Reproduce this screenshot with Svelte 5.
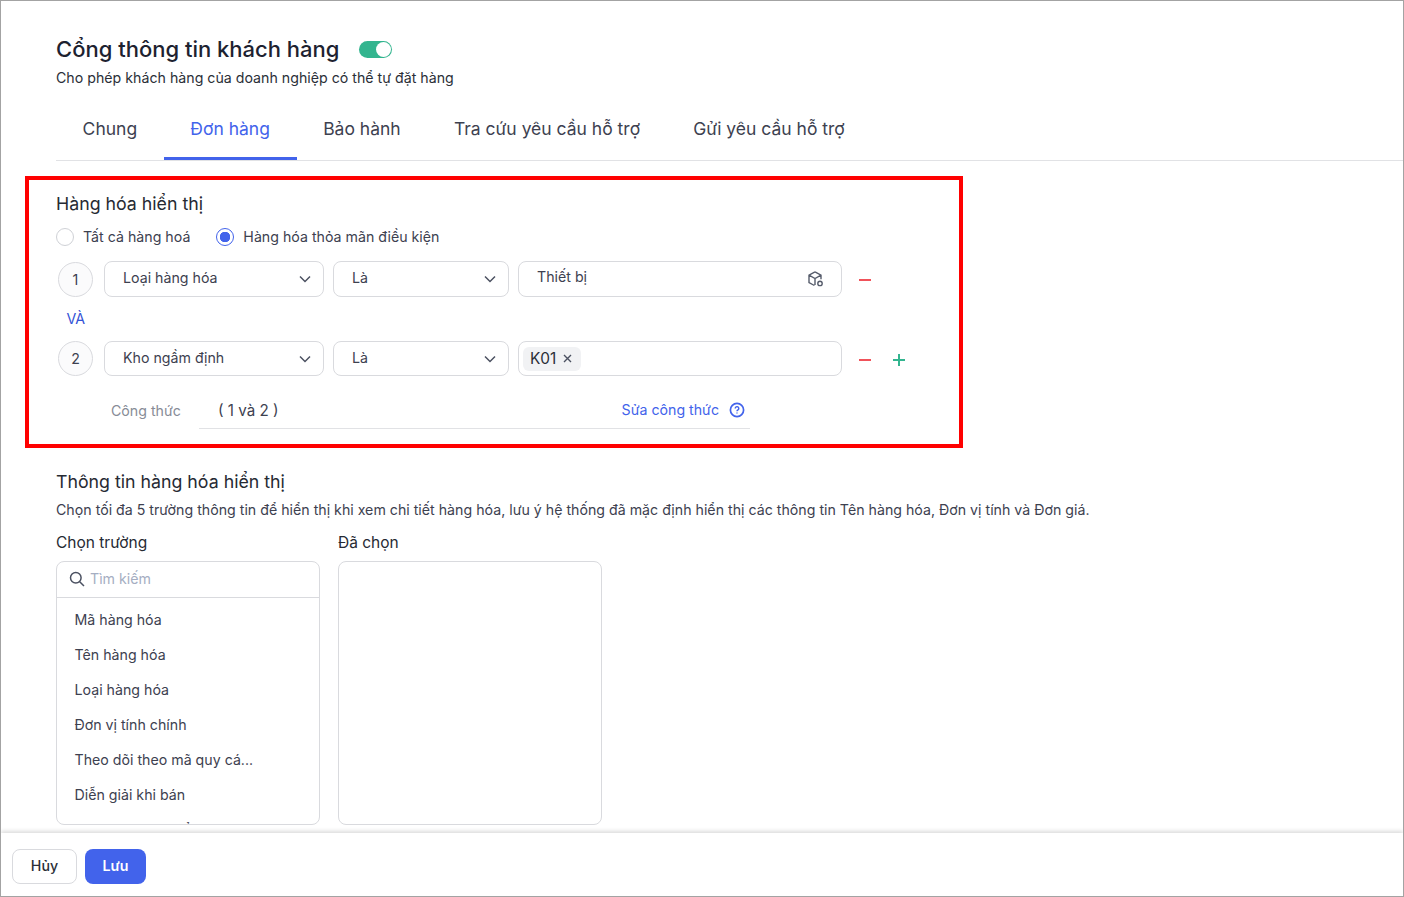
<script>
    const tabs = ["Chung", "Đơn hàng", "Bảo hành", "Tra cứu yêu cầu hỗ trợ", "Gửi yêu cầu hỗ trợ"];
    const fields = [
        "Mã hàng hóa",
        "Tên hàng hóa",
        "Loại hàng hóa",
        "Đơn vị tính chính",
        "Theo dõi theo mã quy cá...",
        "Diễn giải khi bán",
        "Đơn vị quy chuyển"
    ];
</script>

<div class="frame">
    <main>
        <header class="head">
            <div class="title-row">
                <h1>Cổng thông tin khách hàng</h1>
                <span class="toggle"><span class="knob"></span></span>
            </div>
            <p>Cho phép khách hàng của doanh nghiệp có thể tự đặt hàng</p>
        </header>

        <nav class="tabs">
            {#each tabs as tab, i}
                <span class="tab" class:active={i === 1}>{tab}</span>
            {/each}
        </nav>

        <section class="marked">
            <h2>Hàng hóa hiển thị</h2>
            <div class="radios">
                <label class="radio"><span class="dot"></span>Tất cả hàng hoá</label>
                <label class="radio"><span class="dot on"></span>Hàng hóa thỏa mãn điều kiện</label>
            </div>

            <div class="rule">
                <span class="num">1</span>
                <div class="box sel-a">
                    <span>Loại hàng hóa</span>
                    <svg width="12" height="8" viewBox="0 0 12 8"><path d="M1 1.5l5 5 5-5" fill="none" stroke="#4b5161" stroke-width="1.5"/></svg>
                </div>
                <div class="box sel-b">
                    <span>Là</span>
                    <svg width="12" height="8" viewBox="0 0 12 8"><path d="M1 1.5l5 5 5-5" fill="none" stroke="#4b5161" stroke-width="1.5"/></svg>
                </div>
                <div class="box val">
                    <span class="val-text">Thiết bị</span>
                    <svg class="cube" width="18" height="18" viewBox="0 0 18 18" fill="none" stroke="#565c6b" stroke-width="1.4">
                        <path d="M9 1.8l6 3.3v4.2M9 1.8L3 5.1v7.4l5.4 3M3 5.1l6 3.4 6-3.4M9 8.5v6.6"/>
                        <circle cx="14" cy="13.4" r="2.2"/>
                    </svg>
                </div>
                <span class="minus"></span>
            </div>

            <div class="and">VÀ</div>

            <div class="rule second">
                <span class="num">2</span>
                <div class="box sel-a">
                    <span>Kho ngầm định</span>
                    <svg width="12" height="8" viewBox="0 0 12 8"><path d="M1 1.5l5 5 5-5" fill="none" stroke="#4b5161" stroke-width="1.5"/></svg>
                </div>
                <div class="box sel-b">
                    <span>Là</span>
                    <svg width="12" height="8" viewBox="0 0 12 8"><path d="M1 1.5l5 5 5-5" fill="none" stroke="#4b5161" stroke-width="1.5"/></svg>
                </div>
                <div class="box val chips">
                    <span class="chip">K01
                        <svg width="9" height="9" viewBox="0 0 9 9"><path d="M1 1l7 7M8 1l-7 7" stroke="#4b5161" stroke-width="1.4"/></svg>
                    </span>
                </div>
                <span class="minus"></span>
                <span class="plus"></span>
            </div>

            <div class="formula">
                <span class="f-label">Công thức</span>
                <div class="f-value">
                    <span class="f-text">( 1 và 2 )</span>
                    <span class="f-edit">Sửa công thức
                        <svg width="16" height="16" viewBox="0 0 16 16" fill="none" stroke="#4263eb" stroke-width="1.7">
                            <circle cx="8" cy="8" r="6.6"/>
                            <path d="M6.2 6.4a1.8 1.8 0 1 1 2.7 1.6c-.6.3-.9.6-.9 1.2" stroke-width="1.4"/>
                            <path d="M8 10.6v1" stroke-width="1.4"/>
                        </svg>
                    </span>
                </div>
            </div>
        </section>

        <section class="info">
            <h2>Thông tin hàng hóa hiển thị</h2>
            <p>Chọn tối đa 5 trường thông tin để hiển thị khi xem chi tiết hàng hóa, lưu ý hệ thống đã mặc định hiển thị các thông tin Tên hàng hóa, Đơn vị tính và Đơn giá.</p>
            <div class="pickers">
                <div class="picker">
                    <h3>Chọn trường</h3>
                    <div class="list">
                        <div class="search">
                            <svg width="16" height="16" viewBox="0 0 16 16" fill="none" stroke="#4b5161" stroke-width="1.5">
                                <circle cx="6.8" cy="6.8" r="5.3"/>
                                <path d="M10.7 10.7l4.3 4.3"/>
                            </svg>
                            <span>Tìm kiếm</span>
                        </div>
                        <ul>
                            {#each fields as field}
                                <li>{field}</li>
                            {/each}
                        </ul>
                    </div>
                </div>
                <div class="picker">
                    <h3>Đã chọn</h3>
                    <div class="list"></div>
                </div>
            </div>
        </section>
    </main>

    <footer>
        <button class="cancel">Hủy</button>
        <button class="save">Lưu</button>
    </footer>
</div>

<style>
    :global(body) {
        margin: 0;
        font-family: Inter, "Noto Sans", sans-serif;
        color: #2b2f38;
        background: #fff;
    }
    .frame {
        box-sizing: border-box;
        width: 1404px;
        height: 897px;
        border: 1px solid #a3a3a3;
        display: flex;
        flex-direction: column;
        overflow: hidden;
        font-size: 14.2px;
    }
    main {
        flex: 1;
        min-height: 0;
        overflow: hidden;
        padding-top: 34px;
    }
    h1, h2, h3, p, ul {
        margin: 0;
        padding: 0;
    }
    .head {
        padding-left: 55px;
    }
    .title-row {
        display: flex;
        align-items: center;
        gap: 20px;
        height: 28px;
    }
    h1 {
        font-size: 22px;
        font-weight: 500;
        line-height: 28px;
        color: #1d2230;
    }
    .toggle {
        width: 33px;
        height: 17px;
        border-radius: 9px;
        background: #33b58f;
        display: flex;
        align-items: center;
        justify-content: flex-end;
        padding-right: 1.5px;
        box-sizing: border-box;
    }
    .knob {
        width: 15px;
        height: 15px;
        border-radius: 50%;
        background: #fff;
    }
    .head p {
        margin-top: 5px;
        line-height: 20px;
        color: #2b2f38;
    }
    .tabs {
        display: flex;
        margin: 24px 0 0 55px;
        border-bottom: 1px solid #e1e2e5;
        height: 48px;
    }
    .tab {
        padding: 5px 26.6px 0;
        font-size: 17.5px;
        line-height: 24px;
        color: #3d4150;
        box-sizing: border-box;
        height: 48px;
    }
    .tab.active {
        color: #4263eb;
        border-bottom: 3px solid #4263eb;
    }
    .marked {
        box-sizing: border-box;
        width: 938px;
        height: 272px;
        margin: 15px 0 0 24px;
        border: 4px solid #ff0000;
        padding: 12px 0 0 27px;
    }
    h2 {
        font-size: 17.76px;
        font-weight: 400;
        line-height: 24px;
        color: #262a33;
    }
    .radios {
        display: flex;
        gap: 26px;
        margin-top: 11px;
        height: 20px;
        align-items: center;
    }
    .radio {
        display: flex;
        align-items: center;
        gap: 9px;
        line-height: 20px;
        color: #3d4150;
    }
    .dot {
        box-sizing: border-box;
        width: 18px;
        height: 18px;
        border-radius: 50%;
        border: 1.5px solid #cfd1d6;
        background: #fff;
    }
    .dot.on {
        border-color: #4263eb;
        background: radial-gradient(circle, #4263eb 0 5px, #fff 5.5px);
    }
    .rule {
        display: flex;
        align-items: center;
        height: 36px;
        margin-top: 14px;
    }
    .rule.second {
        height: 35px;
        margin-top: 0;
    }
    .num {
        box-sizing: border-box;
        width: 35px;
        height: 35px;
        margin-left: 2px;
        margin-right: 11px;
        flex: none;
        border-radius: 50%;
        border: 1px solid #d9dade;
        background: #fbfbfc;
        display: flex;
        align-items: center;
        justify-content: center;
        color: #3d4150;
    }
    .box {
        box-sizing: border-box;
        height: 100%;
        flex: none;
        margin-right: 9px;
        border: 1px solid #d9dade;
        border-radius: 8px;
        display: flex;
        align-items: center;
        justify-content: space-between;
        padding: 0 12px 3px 18px;
        color: #3d4150;
    }
    .box svg {
        margin-top: 3px;
    }
    .sel-a {
        width: 220px;
    }
    .sel-b {
        width: 176px;
    }
    .val {
        width: 324px;
        margin-right: 17px;
        padding-right: 17px;
    }
    .val-text {
        padding-bottom: 2px;
    }
    .cube {
        margin-right: 0;
    }
    .chips {
        padding: 0 0 0 4px;
        justify-content: flex-start;
    }
    .chip {
        display: flex;
        align-items: center;
        gap: 7px;
        height: 24px;
        padding: 0 9px 1px 7px;
        box-sizing: border-box;
        border-radius: 6px;
        background: #f1f2f4;
        color: #2b2f38;
        font-size: 15.4px;
    }
    .chip svg {
        margin-top: 1px;
    }
    .minus, .plus {
        position: relative;
        width: 12px;
        height: 12px;
        flex: none;
        margin-top: 2px;
    }
    .minus::before, .plus::before, .plus::after {
        content: "";
        position: absolute;
        left: 0;
        right: 0;
        top: 5px;
        height: 2px;
        background: #f0525a;
    }
    .plus {
        margin-left: 22px;
    }
    .plus::before, .plus::after {
        background: #33b58f;
    }
    .plus::after {
        transform: rotate(90deg);
    }
    .and {
        box-sizing: border-box;
        height: 44px;
        padding: 0 0 2px 10.5px;
        display: flex;
        align-items: center;
        color: #3553d6;
    }
    .formula {
        display: flex;
        align-items: center;
        height: 39px;
        margin-top: 14px;
    }
    .f-label {
        width: 143px;
        padding: 2px 0 0 55px;
        box-sizing: border-box;
        color: #878c97;
    }
    .f-value {
        box-sizing: border-box;
        width: 551px;
        height: 39px;
        border-bottom: 1px solid #e1e2e5;
        display: flex;
        align-items: center;
        justify-content: space-between;
        padding: 1px 5px 0 19px;
        color: #3d4150;
    }
    .f-text {
        font-size: 15.2px;
        margin-top: 2px;
    }
    .f-edit {
        display: flex;
        align-items: center;
        gap: 10px;
        color: #4263eb;
    }
    .info {
        padding: 22px 0 0 55px;
    }
    .info p {
        margin-top: 6px;
        line-height: 20px;
        color: #3d4150;
    }
    .pickers {
        display: flex;
        gap: 18px;
        margin-top: 13px;
    }
    .picker {
        width: 264px;
    }
    h3 {
        font-size: 15.5px;
        font-weight: 400;
        line-height: 20px;
        color: #262a33;
    }
    .list {
        box-sizing: border-box;
        height: 264px;
        margin-top: 8px;
        border: 1px solid #d9dade;
        border-radius: 8px;
        overflow: hidden;
    }
    .search {
        display: flex;
        align-items: center;
        gap: 5px;
        padding: 0 0 2px 12px;
        box-sizing: content-box;
        height: 33px;
        border-bottom: 1px solid #d9dade;
        color: #a5aec2;
    }
    ul {
        list-style: none;
        padding: 4px 0 0 17.5px;
    }
    li {
        height: 35px;
        line-height: 35px;
        color: #3d4150;
        white-space: nowrap;
    }
    footer {
        flex: none;
        box-sizing: border-box;
        height: 63px;
        display: flex;
        gap: 8px;
        align-items: flex-start;
        padding: 16px 0 0 11px;
        background: #fff;
        box-shadow: 0 -2px 4px rgba(0, 0, 0, 0.14);
        position: relative;
    }
    button {
        box-sizing: border-box;
        height: 35px;
        padding: 0 0 3px;
        border-radius: 8px;
        font: 500 14.2px Inter, "Noto Sans", sans-serif;
    }
    .cancel {
        width: 65px;
        background: #fff;
        border: 1px solid #d9dade;
        color: #2b2f38;
    }
    .save {
        width: 61px;
        background: #4263eb;
        border: 0;
        color: #fff;
        font-weight: 600;
    }
</style>
